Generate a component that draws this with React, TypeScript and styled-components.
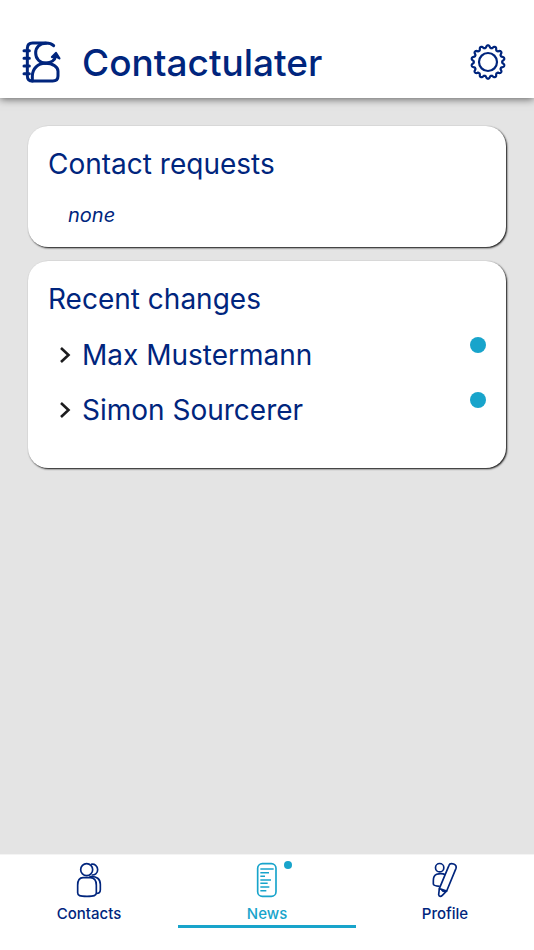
import React, { useState } from "react";
import styled, { createGlobalStyle } from "styled-components";

const navy = "#00257d";
const cyan = "#18a4cb";

const GlobalStyle = createGlobalStyle`
  * { box-sizing: border-box; }
  body { margin: 0; background: #e4e4e4; }
  button { font: inherit; color: inherit; background: none; border: 0; padding: 0; cursor: pointer; }
  h1, h2, p, ul { margin: 0; padding: 0; font-weight: 400; }
`;

const Screen = styled.div`
  display: flex;
  flex-direction: column;
  min-height: 100vh;
  background: #e4e4e4;
  color: ${navy};
  font-family: Inter, "Liberation Sans", sans-serif;
`;

const Header = styled.header`
  display: flex;
  align-items: center;
  padding: 26px 26px 0 20px;
  height: 98px;
  background: #fff;
  box-shadow: 0 1px 8px rgba(0, 0, 0, 0.6);
`;

const Title = styled.h1`
  flex: 1;
  margin-left: 18px;
  padding-top: 2px;
  font-size: 37px;
  line-height: 44px;
  && { font-weight: 500; }
`;

const IconButton = styled.button`
  display: flex;
`;

const Content = styled.main`
  flex: 1;
  display: flex;
  flex-direction: column;
  gap: 14px;
  padding: 28px;
`;

const Card = styled.section<{ $roomy?: boolean }>`
  padding: 20px 20px ${(p) => (p.$roomy ? 31 : 17)}px;
  border-radius: 20px;
  background: #fff;
  box-shadow: 1px 1px 2px rgba(0, 0, 0, 0.95);
`;

const CardTitle = styled.h2`
  font-size: 28px;
  line-height: 36px;
`;

const Empty = styled.p`
  padding: 18px 0 0 20px;
  font-size: 20px;
  line-height: 30px;
  font-style: italic;
`;

const ChangeList = styled.ul`
  padding: 10px 0 0 12px;
  list-style: none;
`;

const ChangeItem = styled.button`
  display: flex;
  align-items: center;
  width: 100%;
  height: 55px;
  font-size: 28px;
  line-height: 36px;
  text-align: left;
`;

const Name = styled.span`
  flex: 1;
  margin-left: 10px;
`;

const Dot = styled.span`
  align-self: flex-start;
  width: 16px;
  height: 16px;
  margin-top: 10px;
  border-radius: 50%;
  background: ${cyan};
`;

const TabBar = styled.nav`
  display: grid;
  grid-template-columns: repeat(3, 1fr);
  height: 96px;
  padding-bottom: 22px;
  border-top: 1px solid #f4f4f4;
  background: #fff;
`;

const Tab = styled.button<{ $active: boolean }>`
  && { color: ${(p) => (p.$active ? cyan : navy)}; }
  display: flex;
  flex-direction: column;
  align-items: center;
  gap: 4px;
  padding-top: 5px;
  height: 73px;
  border-bottom: 3px solid ${(p) => (p.$active ? cyan : "transparent")};
  font-size: 15px;
  line-height: 20px;
  font-weight: 500;
`;

const TabIcon = styled.span`
  position: relative;
  display: flex;
`;

const Badge = styled.span`
  position: absolute;
  top: 1px;
  right: -5px;
  width: 8px;
  height: 8px;
  border-radius: 50%;
  background: ${cyan};
`;

const Logo = () => (
  <svg width="44" height="44" viewBox="30 30 132 132" fill="none" stroke={navy} strokeWidth="9" strokeLinecap="round" strokeLinejoin="round" aria-hidden="true">
    <path d="M131 47C125 41 119 39 108 39H68Q52 39 52 55V137Q52 153 68 153H128Q144 153 144 138V124C144 112 130 100 106 100" />
    <path d="M108 40C90 40 77 51 77 69C77 87 90 99 107 99C123 99 135 91 137 78" />
    <path d="M67 153V139C67 115 84 100 106 100" />
    <path d="M42 62H58M42 85H58M42 108H58M42 131H58" />
    <path d="M138 69L126 81L137 79L148 85Z" fill={navy} strokeWidth="7" />
  </svg>
);

const TEETH = 14;
const gearPath =
  Array.from({ length: TEETH * 12 }, (_, i) => {
    const angle = (i / (TEETH * 12)) * Math.PI * 2;
    const wave = Math.max(-1, Math.min(1, Math.cos(angle * TEETH) * 1.4));
    const radius = 15.4 + wave * 1.2;
    return `${i ? "L" : "M"}${(18 + radius * Math.sin(angle)).toFixed(2)} ${(18 - radius * Math.cos(angle)).toFixed(2)}`;
  }).join("") + "Z";

const Gear = () => (
  <svg width="40" height="40" viewBox="-2 -2 40 40" fill="none" stroke={navy} strokeWidth="2.2" strokeLinejoin="round" aria-hidden="true">
    <path d={gearPath} />
    <circle cx="18" cy="18" r="9" />
  </svg>
);

const Chevron = () => (
  <svg width="12" height="18" viewBox="0 0 12 18" fill="none" stroke="#1c1c1e" strokeWidth="2.6" aria-hidden="true">
    <path d="M1 2L8.500 9L1 16" />
  </svg>
);

const ContactsIcon = () => (
  <svg width="40" height="40" viewBox="27 30 120 120" fill="none" stroke="currentColor" strokeWidth="5" aria-hidden="true">
    <circle cx="80" cy="59" r="18" />
    <path d="M93 43C104 40 113 49 113 59C113 70 104 76 95 75" />
    <path d="M69 83H91C105 83 109 94 109 106V128C109 137 102 139 81 139C59 139 53 137 53 128V106C53 93 58 83 69 83Z" />
    <path d="M88 80C111 77 121 88 121 103V119C121 127 118 130 109 130" />
  </svg>
);

const NewsIcon = () => (
  <svg width="40" height="40" viewBox="21 30 120 120" fill="none" stroke="currentColor" strokeWidth="5" aria-hidden="true">
    <rect x="53" y="41" width="55" height="98" rx="14" />
    <path d="M61 57H101M61 68H87M61 79H75M61 90H93M61 100H83M61 111H88M61 122H79" strokeWidth="4.5" />
  </svg>
);

const ProfileIcon = () => (
  <svg width="40" height="40" viewBox="30 30 120 120" fill="none" stroke="currentColor" strokeWidth="5" strokeLinejoin="round" aria-hidden="true">
    <circle cx="74" cy="53" r="12.5" />
    <path d="M91 74C83 70 71 71 65 73C57 76 55 83 55 92V102C55 107 62 108 74 109" />
    <path d="M102 46C104 40 110 40 116 42C123 45 125 49 123 55L95 123L73 116Z" />
    <path d="M73 116L71 134C72 141 78 140 82 136L95 123C88 126 84 125 80 119" />
  </svg>
);

const tabs = [
  { label: "Contacts", Icon: ContactsIcon, unread: false },
  { label: "News", Icon: NewsIcon, unread: true },
  { label: "Profile", Icon: ProfileIcon, unread: false },
];

const changes = ["Max Mustermann", "Simon Sourcerer"];

export default function App() {
  const [active, setActive] = useState("News");
  return (
    <Screen>
      <GlobalStyle />
      <Header>
        <Logo />
        <Title>Contactulater</Title>
        <IconButton type="button" aria-label="Settings">
          <Gear />
        </IconButton>
      </Header>
      <Content>
        <Card>
          <CardTitle>Contact requests</CardTitle>
          <Empty>none</Empty>
        </Card>
        <Card $roomy>
          <CardTitle>Recent changes</CardTitle>
          <ChangeList>
            {changes.map((name) => (
              <li key={name}>
                <ChangeItem type="button">
                  <Chevron />
                  <Name>{name}</Name>
                  <Dot />
                </ChangeItem>
              </li>
            ))}
          </ChangeList>
        </Card>
      </Content>
      <TabBar>
        {tabs.map(({ label, Icon, unread }) => (
          <Tab key={label} type="button" $active={active === label} onClick={() => setActive(label)}>
            <TabIcon>
              <Icon />
              {unread && <Badge />}
            </TabIcon>
            {label}
          </Tab>
        ))}
      </TabBar>
    </Screen>
  );
}
